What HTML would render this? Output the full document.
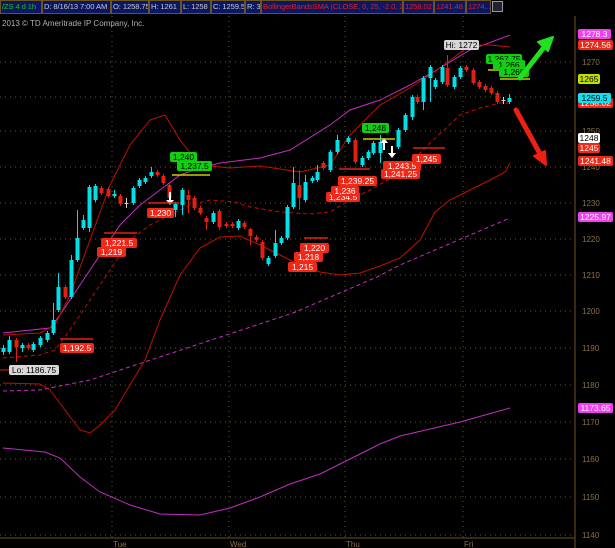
<!DOCTYPE html>
<html><head><meta charset="utf-8"><style>
html,body{margin:0;padding:0;background:#000;width:615px;height:548px;overflow:hidden;font-family:"Liberation Sans",sans-serif}
#bar{position:absolute;left:0;top:0;height:14px;width:615px;background:#000}
.b{position:absolute;top:0;background:#0b1760;border:1px solid #6b5420;color:#c8c8c8;font-size:7.6px;letter-spacing:-0.1px;line-height:12px;white-space:nowrap;overflow:hidden;padding-left:1px;box-sizing:border-box;height:14px}
svg{position:absolute;left:0;top:0}
</style></head><body>
<svg id="s" width="615" height="548" xmlns="http://www.w3.org/2000/svg" font-family="Liberation Sans, sans-serif"></svg>
<div id="bar">
<div class="b" style="left:0;width:42px;color:#20c020">/ZS 4 d 1h</div>
<div class="b" style="left:42px;width:69px">D: 8/16/13 7:00 AM</div>
<div class="b" style="left:111px;width:38px">O: 1258.75</div>
<div class="b" style="left:149px;width:32px">H: 1261</div>
<div class="b" style="left:181px;width:30px">L: 1258</div>
<div class="b" style="left:211px;width:34px">C: 1259.5</div>
<div class="b" style="left:245px;width:16px">R: 3</div>
<div class="b" style="left:261px;width:142px;color:#e02020">BollingerBandsSMA (CLOSE, 0, 25, -2.0, 2.0)</div>
<div class="b" style="left:403px;width:31px;color:#e02020">1258.02</div>
<div class="b" style="left:434px;width:32px;color:#e02020">1241.48</div>
<div class="b" style="left:466px;width:25px;color:#e02020">1274...</div>
<div style="position:absolute;left:492px;top:1px;width:11px;height:11px;background:#223;border:1px solid #999;box-sizing:border-box"></div>
</div>
<script>
var s=document.getElementById('s'),h='';
h+='<text x="2" y="26" fill="#b0b0b0" font-size="8">2013 © TD Ameritrade IP Company, Inc.</text>';
var grid=[[1270,62],[1260,97],[1250,131],[1240,167],[1230,203],[1220,239],[1210,275],[1200,311],[1190,348],[1180,385],[1170,422],[1160,459],[1150,497],[1140,535]];
grid.forEach(function(g){h+='<line x1="0" x2="575" y1="'+g[1]+'" y2="'+g[1]+'" stroke="#6b5420" stroke-dasharray="1,4"/>';
h+='<text x="582" y="'+(g[1]+3)+'" fill="#8a7040" font-size="8">'+g[0]+'</text>';});
[112,229,345,463].forEach(function(x){h+='<line x1="'+x+'" x2="'+x+'" y1="16" y2="538" stroke="#6b5420" stroke-dasharray="1,4"/>';});
h+='<line x1="575" x2="575" y1="16" y2="548" stroke="#6b5420"/><line x1="0" x2="575" y1="538" y2="538" stroke="#6b5420"/>';
[['Tue',112],['Wed',229],['Thu',345],['Fri',463]].forEach(function(d){h+='<text x="'+(d[1]+1)+'" y="547" fill="#8a7040" font-size="8">'+d[0]+'</text>';});
function pl(p,c,dash){h+='<polyline fill="none" stroke="'+c+'" stroke-width="1"'+(dash?' stroke-dasharray="4,3"':'')+' points="'+p.map(function(a){return a.join(',')}).join(' ')+'"/>';}
pl([[3,333],[50,328],[60,315],[80,285],[100,255],[120,225],[140,205],[160,190],[180,175],[200,168],[220,163],[260,158],[290,150],[330,125],[350,110],[380,100],[410,85],[440,68],[470,50],[510,35]],'#c030c0');
pl([[3,448],[45,452],[60,458],[80,477],[100,492],[130,505],[160,514],[200,515],[230,508],[260,497],[290,484],[320,474],[350,459],[380,444],[400,436],[430,429],[460,422],[485,415],[510,408]],'#c030c0');
pl([[3,391],[40,390],[75,383],[90,380],[293,313],[377,277],[400,265],[510,218]],'#c030c0',1);
pl([[3,335],[40,333],[55,325],[70,295],[90,240],[110,185],[130,145],[150,120],[165,115],[180,140],[200,165],[230,168],[260,166],[300,172],[330,165],[350,135],[380,105],[410,88],[440,68],[470,45],[490,45],[510,47]],'#c01000');
pl([[3,383],[40,384],[50,390],[65,410],[80,430],[90,433],[100,425],[115,410],[130,385],[145,360],[160,320],[180,275],[200,248],[220,237],[240,236],[260,245],[280,255],[300,265],[320,272],[340,275],[360,273],[380,266],[400,258],[420,240],[435,212],[450,200],[470,190],[490,180],[505,172],[510,163]],'#c01000');
pl([[3,358],[40,355],[55,350],[70,330],[90,300],[110,270],[130,240],[150,225],[170,215],[190,205],[210,200],[235,202],[250,207],[280,212],[310,214],[330,212],[350,200],[370,190],[400,173],[430,143],[460,115],[480,108],[500,103],[510,103]],'#c01000',1);
h+='<line x1="0" x2="10" y1="370" y2="370" stroke="#e02000"/>';
var C='#00e0e8',R='#e02010',W='#d0d0d0';
var cs=[[3,348,352,345,355,C],[9,340,352,336,354,C],[16,340,347,338,362,R],[22,345,348,343,352,C],[28,345,348,343,350,R],[33,344,350,342,352,C],[40,338,345,336,347,C],[47,333,340,331,342,C],[53,320,333,303,335,C],[58,287,310,273,312,C],[65,287,297,285,299,R],[71,260,297,255,299,C],[77,238,260,210,262,C],[83,220,228,215,230,C],[89,187,228,185,232,C],[95,186,200,184,202,C],[101,188,193,186,195,R],[108,189,196,187,198,R],[114,194,196,190,198,C],[120,196,204,194,206,R],[126,203,204,198,208,W],[133,188,203,186,205,C],[139,180,186,178,188,C],[145,178,182,176,184,C],[151,172,176,167,178,C],[157,172,175,170,177,R],[163,176,183,174,185,R],[169,185,198,183,200,R],[175,204,210,202,217,C],[182,190,205,188,215,C],[188,195,200,190,213,R],[194,198,208,196,210,R],[200,208,213,206,215,R],[206,218,222,216,230,R],[213,213,222,211,224,C],[219,211,227,209,230,R],[226,224,226,222,228,R],[232,224,226,222,228,R],[238,221,228,219,230,C],[244,223,227,221,229,R],[250,229,236,228,245,R],[256,237,240,235,242,R],[262,242,258,240,260,R],[268,258,264,256,266,C],[275,243,256,230,258,C],[281,238,243,236,245,C],[287,207,238,205,240,C],[293,183,207,167,209,C],[299,185,198,170,210,R],[305,182,200,175,202,C],[312,178,181,176,183,C],[317,172,180,165,182,C],[323,163,168,161,170,R],[330,152,170,150,172,C],[337,140,152,135,154,C],[348,138,142,136,144,C],[355,140,162,138,164,R],[362,158,165,156,167,C],[368,152,158,150,160,C],[373,143,153,141,155,C],[380,142,153,135,163,C],[398,130,147,128,149,C],[405,115,130,113,132,C],[412,97,117,95,120,C],[417,97,102,95,104,R],[423,78,102,76,110,C],[430,67,78,65,102,C],[435,80,87,78,89,C],[442,67,82,65,84,C],[447,68,85,55,87,R],[454,77,87,75,89,C],[460,68,77,66,79,C],[466,67,70,65,72,R],[473,70,83,68,85,R],[479,82,87,80,89,R],[485,86,90,84,92,R],[491,88,93,86,95,R],[497,93,102,91,104,R],[503,100,101,97,104,W],[509,98,102,94,104,C]];
cs.forEach(function(c){h+='<line x1="'+(c[0]+0.5)+'" x2="'+(c[0]+0.5)+'" y1="'+c[3]+'" y2="'+c[4]+'" stroke="'+c[5]+'"/>';
h+='<rect x="'+(c[0]-1.5)+'" y="'+c[1]+'" width="4" height="'+Math.max(1,c[2]-c[1])+'" fill="'+c[5]+'"/>';});
h+='<path d="M170,205 l-4,-5 h3 v-8 h2 v8 h3 z" fill="#fff"/>';
h+='<path d="M384,138 l-4,5 h3 v7 h2 v-7 h3 z M392,158 l-4,-5 h3 v-7 h2 v7 h3 z" fill="#fff"/>';
[[60,93,339,R],[104,137,233,R],[148,179,203,R],[304,328,238,R],[339,370,169,R],[413,445,148,R],[172,210,175,'#c8d000'],[363,395,139,'#c8d000'],[500,530,79,'#c8d000'],[488,503,70,'#c8d000']].forEach(function(l){h+='<line x1="'+l[0]+'" x2="'+l[1]+'" y1="'+l[2]+'" y2="'+l[2]+'" stroke="'+l[3]+'" stroke-width="1.5"/>';});
function lab(x,y,w,t,bg,fg){h+='<rect x="'+x+'" y="'+(y-5)+'" width="'+w+'" height="10" rx="2" fill="'+bg+'"/><text x="'+(x+w/2)+'" y="'+(y+3)+'" fill="'+(fg||'#fff')+'" font-size="8.5" text-anchor="middle">'+t+'</text>';}
var RB='#f02818',GB='#10d010';
lab(60,348,34,'1,192.5',RB);lab(101,243,36,'1,221.5',RB);lab(97,252,29,'1,219',RB);lab(147,213,27,'1,230',RB);
lab(300,248,29,'1,220',RB);lab(294,257,29,'1,218',RB);lab(288,267,29,'1,215',RB);
lab(326,197,34,'1,234.5',RB);lab(331,191,28,'1,236',RB);lab(338,181,39,'1,239.25',RB);
lab(381,174,39,'1,241.25',RB);lab(383,166,38,'1,243.5',RB);lab(412,159,29,'1,245',RB);
lab(170,157,27,'1,240',GB,'#000');lab(177,166,35,'1,237.5',GB,'#000');lab(362,128,27,'1,248',GB,'#000');
lab(486,59,36,'1,267.75',GB,'#000');lab(493,65,32,'1,266',GB,'#000');lab(499,72,30,'1,265',GB,'#000');
lab(444,45,35,'Hi: 1272','#d8d8d8','#000');lab(9,370,50,'Lo: 1186.75','#d8d8d8','#000');
lab(578,34,33,'1278.3','#f040f0');lab(578,45,35,'1274.56',RB);lab(578,79,22,'1265','#c0e000','#000');
lab(578,103,35,'1258.02',RB);lab(578,98,33,'1259.5','#10e0f0','#000');lab(578,138,22,'1248','#fff','#000');
lab(578,148,22,'1245',RB);lab(578,161,35,'1241.48',RB);lab(578,217,35,'1225.97','#f040f0');lab(578,408,35,'1173.65','#f040f0');
h+='<line x1="520" y1="78" x2="545" y2="46" stroke="#20e020" stroke-width="5" stroke-linecap="round"/><path d="M553,37 l-15,5 l10,9 z" fill="#20e020" stroke="#20e020" stroke-width="2" stroke-linejoin="round"/>';
h+='<line x1="516" y1="110" x2="539" y2="152" stroke="#f02010" stroke-width="5" stroke-linecap="round"/><path d="M546,165 l-12,-9 l11,-5 z" fill="#f02010" stroke="#f02010" stroke-width="2" stroke-linejoin="round"/>';
s.innerHTML=h;
</script>
</body></html>
